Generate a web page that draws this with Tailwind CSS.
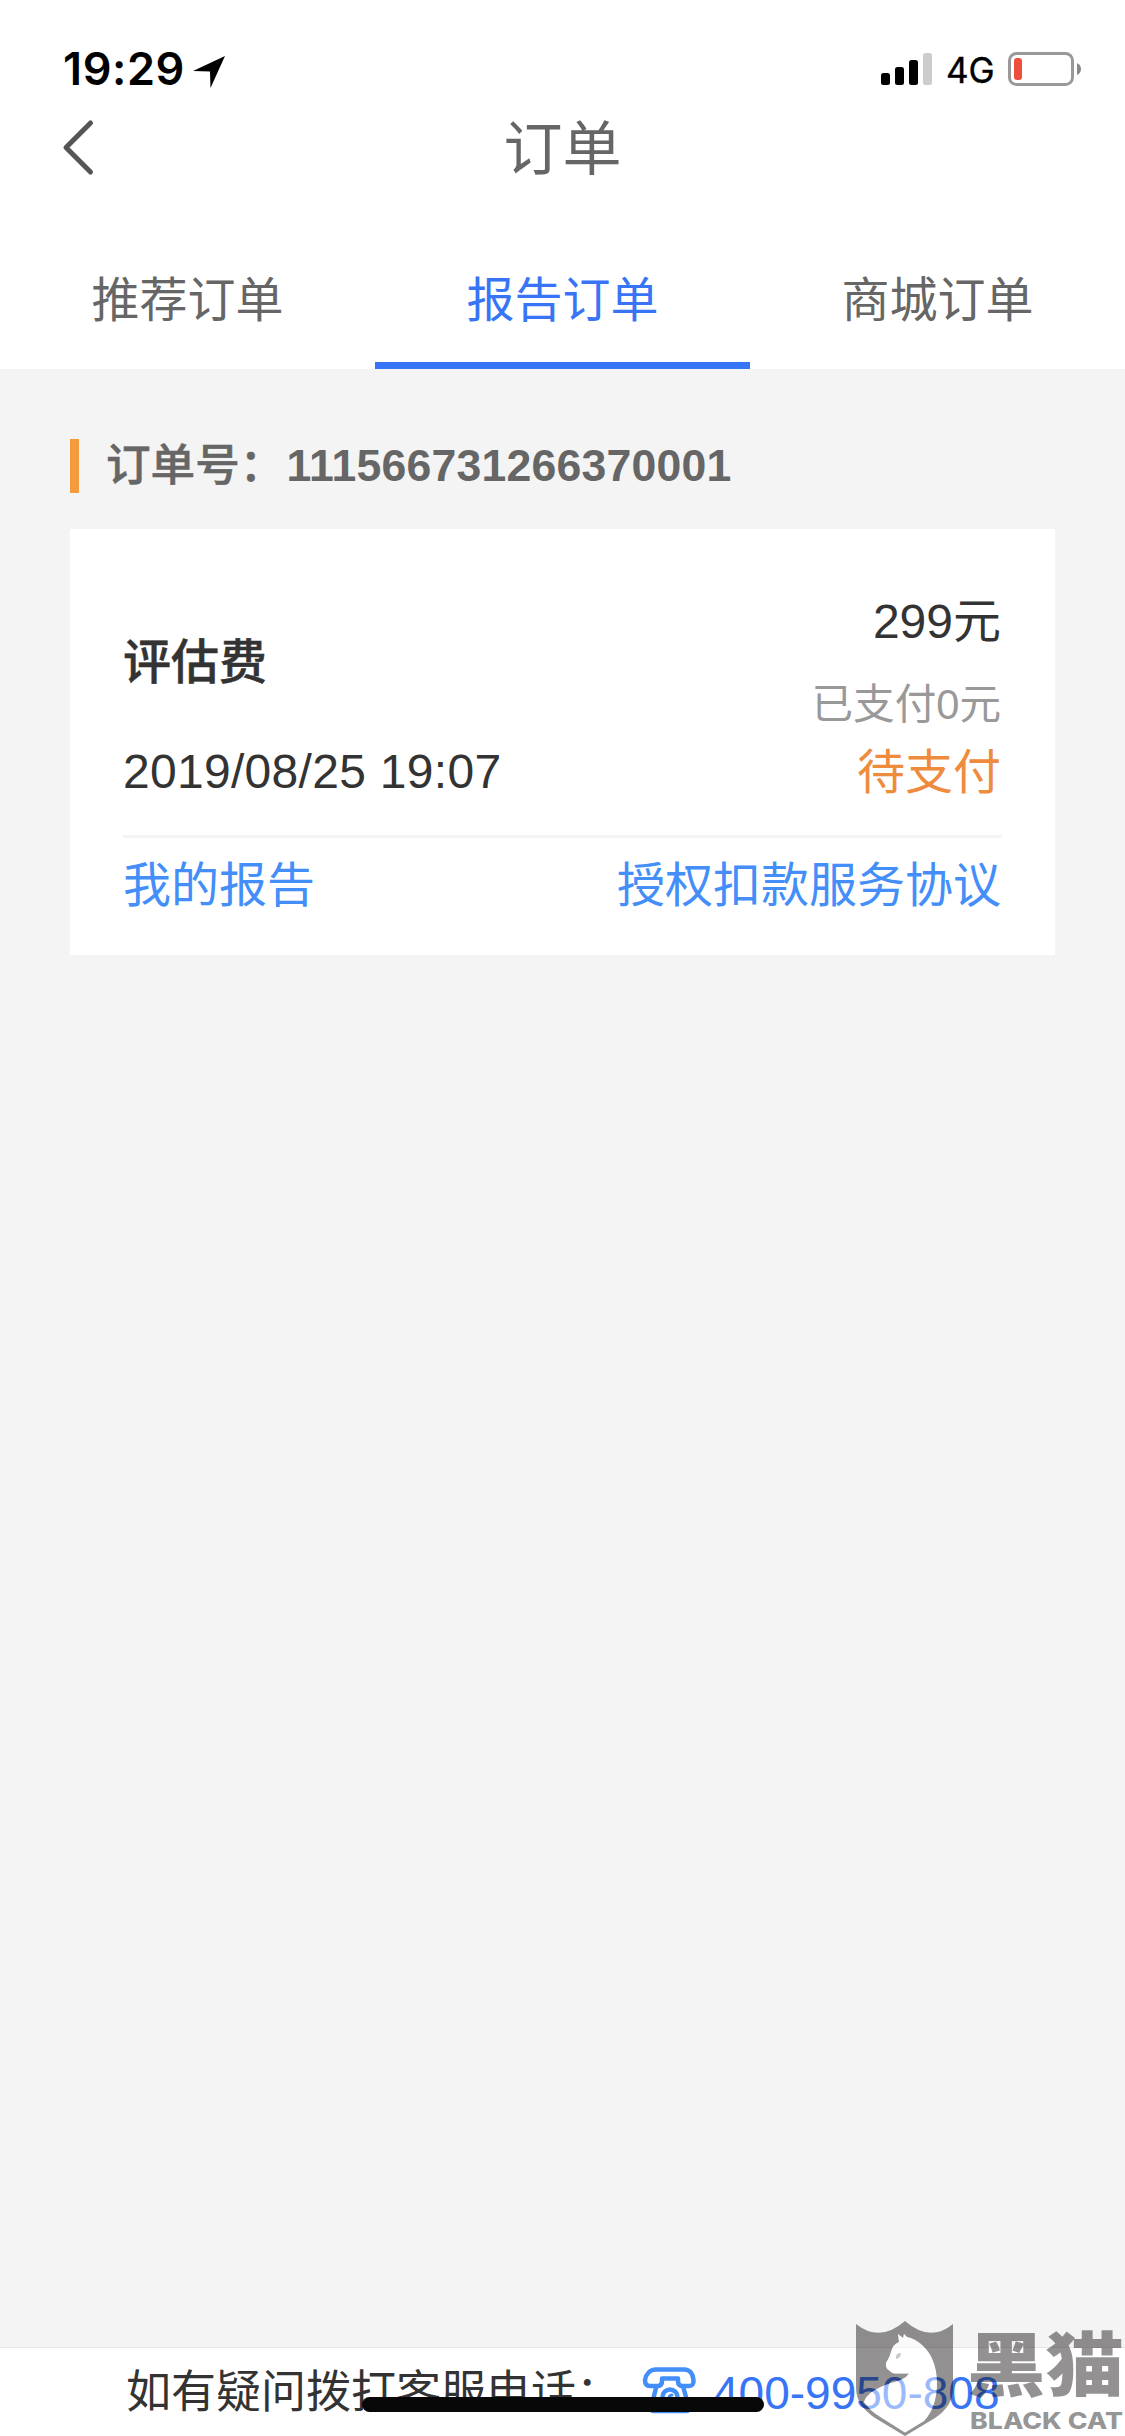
<!DOCTYPE html>
<html lang="zh-CN">
<head>
<meta charset="utf-8">
<title>订单</title>
<script src="https://cdn.jsdelivr.net/npm/@tailwindcss/browser@4"></script>
</head>
<body class="bg-[#f4f4f4]">
<div class="relative flex h-[2436px] w-[1125px] flex-col overflow-hidden bg-[#f4f4f4] font-['Liberation_Sans','Noto_Sans_CJK_SC',sans-serif] text-[#333]">
  <div class="flex h-[110px] items-start justify-between bg-white pr-[43px] pl-[63px] text-black">
    <div class="flex items-start">
      <span class="mt-[43px] h-[52px] w-[122px] whitespace-nowrap font-['Inter',sans-serif] text-[45px] leading-[52px] font-semibold tracking-[0.6px]">19:29</span>
      <svg class="mt-[55px] ml-[8px]" width="33" height="34" viewBox="0 0 33 34"><path d="M32 1 0 16l17 .5L17.500 33z"/></svg>
    </div>
    <div class="flex items-start">
      <svg class="mt-[53px]" width="52" height="32" viewBox="0 0 52 32"><rect y="20" width="9" height="12" rx="2.500"/><rect x="14" y="14" width="9" height="18" rx="2.500"/><rect x="28" y="7" width="9" height="25" rx="2.500"/><rect x="42" width="9" height="32" rx="2.500" fill="#ccc"/></svg>
      <span class="mt-[49px] ml-[13px] w-[49px] whitespace-nowrap font-['Inter',sans-serif] text-[35px] leading-[42px] [-webkit-text-stroke:0.4px]">4G</span>
      <svg class="mt-[52px] ml-[13px]" width="74" height="34" viewBox="0 0 74 34"><rect x="1.500" y="1.500" width="63" height="31" rx="7" fill="none" stroke="#999" stroke-width="3"/><rect x="6" y="6" width="8" height="22" rx="3" fill="#ed4f3c"/><path d="M69 11q4 2 4 6t-4 6z" fill="#888"/></svg>
    </div>
  </div>
  <header class="grid h-[134px] grid-cols-3 items-start bg-white text-[#666]">
    <svg class="mt-[9px] ml-[62px]" width="34" height="57" viewBox="0 0 34 57"><path d="M28.500 4 4 28.500 28.500 53" fill="none" stroke="#555" stroke-width="5" stroke-linecap="round" stroke-linejoin="round"/></svg>
    <h1 class="mt-[2px] text-center text-[59px] leading-[76px]">订单</h1>
  </header>
  <nav class="grid h-[125px] grid-cols-3 bg-white text-center text-[48px] leading-[113px] text-[#666]">
    <a>推荐订单</a>
    <a class="border-b-[7px] border-[#3875f6] text-[#3875f6]">报告订单</a>
    <a>商城订单</a>
  </nav>
  <main class="flex flex-1 flex-col px-[70px] pt-[70px]">
    <div class="flex h-[54px] items-center border-l-[9px] border-[#f39c3f] pl-[27px] text-[44.600px] leading-[54px] font-medium whitespace-nowrap text-[#666]"><span class="[-webkit-text-stroke:0.5px]">订单号：</span><span class="ml-[2px] font-bold tracking-[0.2px]">111566731266370001</span></div>
    <section class="mt-[36px] h-[426px] bg-white px-[53px] pt-[56px] text-[48px]">
      <div class="flex h-[250px] justify-between">
        <div class="flex flex-col pt-[44px]">
          <h2 class="h-[68px] leading-[68px] font-medium [-webkit-text-stroke:0.5px]">评估费</h2>
          <p class="mt-[41px] h-[68px] leading-[68px] tracking-[0.3px]">2019/08/25 19:07</p>
        </div>
        <div class="flex flex-col items-end pr-[1px]">
          <p class="mt-[1px] h-[72px] leading-[72px]">299元</p>
          <p class="mt-[17px] h-[60px] text-[41.600px] leading-[60px] text-[#999]">已支付0元</p>
          <p class="mt-[4px] h-[68px] leading-[68px] text-[#ee8b3c]">待支付</p>
        </div>
      </div>
      <div class="flex h-[85px] items-end justify-between border-t-[3px] border-[#f4f4f4] pr-[1px] leading-[68px] text-[#438ef8]"><a>我的报告</a><a>授权扣款服务协议</a></div>
    </section>
  </main>
  <footer class="flex h-[89px] items-start border-t border-[#e5e5e5] bg-white pl-[126px] text-[45px] leading-[90px] whitespace-nowrap">
    <span class="w-[516px]">如有疑问拨打客服电话：</span>
    <svg class="mt-[18px]" width="55" height="48" viewBox="0 0 55 48" fill="none" stroke="#438ef8" stroke-width="4.500" stroke-linejoin="round" stroke-linecap="round"><path d="M14 3.500H42C48 3.500 51 8 51.500 14Q52 20 47 20H40Q36 20 36 15V12.500H20V15Q20 20 16 20H8Q3 20 3 14C4 8 8 3.500 14 3.500z"/><path d="M14 22 9 42Q9 45 12 45H44Q47 45 47 42L41.500 22"/><circle cx="28" cy="31" r="7.500"/><path d="M27 32a3 3 0 0 1 3-3" stroke-width="3"/></svg>
    <span class="ml-[16px] text-[46px] text-[#3875f6]">400-9950-808</span>
  </footer>
  <div class="absolute top-[2397px] left-[362px] h-[15px] w-[402px] rounded-full bg-[#080808]"></div>
  <svg class="absolute top-[2310px] left-[825px]" width="300" height="126" viewBox="0 0 300 126">
    <g fill="#131010" fill-opacity=".46">
      <path fill-rule="evenodd" d="M31 14Q55 33 80 11Q105 33 128 14V78Q128 96 110 108L80 126 50 108Q31 95 31 78zM73 24 74 32Q68 34 66 42Q65 47 61 53Q60 58 65 61Q67 64 72 63.500H84Q80 70 66 73Q42 81 39 92Q45 101 57 108L80 122.500 99 111Q112 97 112 72Q111 48 98 36Q91 29 82 27L79 24 78 28zM71 47Q71 43 76 43Q76 48 71 49z"/>
      <text x="142" y="81" font-family="Noto Sans CJK SC" font-weight="900" font-size="70" textLength="157" lengthAdjust="spacingAndGlyphs">黑猫</text>
      <text x="145" y="119" font-family="Inter" font-weight="800" font-size="23" textLength="153" lengthAdjust="spacingAndGlyphs">BLACK CAT</text>
    </g>
    <path d="M73 24 74 32Q68 34 66 42Q65 47 61 53Q60 58 65 61Q67 64 72 63.500H84Q80 70 66 73Q42 81 39 92Q45 101 57 108L80 122.500 99 111Q112 97 112 72Q111 48 98 36Q91 29 82 27L79 24 78 28z" fill="#fff" fill-opacity=".5"/>
  </svg>
</div>
</body>
</html>
